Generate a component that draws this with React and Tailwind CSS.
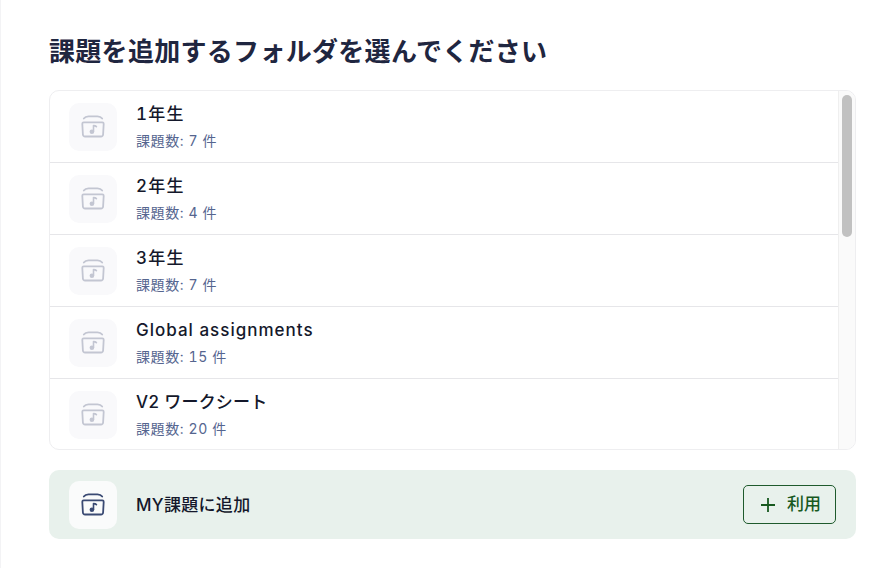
function FolderIcon({ color }) {
  return (
    <svg width="24" height="24" viewBox="0 0 24 24" fill="none" stroke={color} strokeWidth="1.8" strokeLinecap="round" strokeLinejoin="round">
      <path d="M2.8 3.6C4 1.8 5.5 1.3 7.5 1.3h9c2 0 3.5.5 4.7 2.3" />
      <path d="M2.6 7.4h18.8c.8 0 1.3.6 1.3 1.3l-.6 10.8c-.1 1.2-1 2-2.2 2H4.1c-1.2 0-2.1-.8-2.2-2L1.3 8.7c0-.7.5-1.3 1.3-1.3Z" />
      <circle cx="10.9" cy="16.8" r="2.3" fill={color} stroke="none" />
      <path d="M12.5 16.4V10.6c1 0 2.2.2 2.9 1" strokeWidth="1.6" />
    </svg>
  );
}

const rows = [
  { name: "1年生", count: "課題数: 7 件", cls: "tracking-[1.2px]" },
  { name: "2年生", count: "課題数: 4 件", cls: "tracking-[1.2px]" },
  { name: "3年生", count: "課題数: 7 件", cls: "tracking-[1.2px]" },
  { name: "Global assignments", count: "課題数: 15 件", cls: "tracking-[1px]" },
  { name: "V2 ワークシート", count: "課題数: 20 件", cls: "tracking-[0.2px]" },
];

export default function App() {
  return (
    <div className="h-[568px] w-[886px] overflow-hidden border-l border-[#f3f3f5] bg-white pl-[48px] pr-[30px] pt-[37px] font-['Inter','Noto_Sans_CJK_JP',sans-serif]">
      <h1 className="h-[30px] text-[26px] font-semibold leading-[30px] tracking-[0.3px] text-[#1f2640]">
        課題を追加するフォルダを選んでください
      </h1>
      <div className="mt-[23px] flex h-[360px] overflow-hidden rounded-[10px] border border-[#eeeef0] bg-white">
        <div className="flex-1 overflow-hidden">
          {rows.map(({ name, count, cls }) => (
            <div key={name} className="flex h-[72px] shrink-0 items-center gap-[19px] border-b border-[#e6e6e9] pl-[19px]">
              <div className="flex h-[48px] w-[48px] items-center justify-center rounded-[10px] bg-[#f9f9fb]">
                <FolderIcon color="#c3c6d2" />
              </div>
              <div className="pb-[1px] tabular-nums">
                <div className={"text-[17px] font-medium leading-[24px] text-[#14182b] " + cls}>{name}</div>
                <div className="mt-[5px] text-[14px] leading-[20px] tracking-[0.6px] text-[#55658f]">{count}</div>
              </div>
            </div>
          ))}
        </div>
        <div className="w-[17px] border-l border-[#efefef] bg-[#fafafa] pl-[3px] pt-[4px]">
          <div className="h-[142px] w-[10px] rounded-full bg-[#c1c1c1]" />
        </div>
      </div>
      <div className="mt-[20px] flex h-[69px] items-center justify-between rounded-[10px] bg-[#e8f1ec] pl-[20px] pr-[20px]">
        <div className="flex items-center gap-[19px]">
          <div className="flex h-[48px] w-[48px] items-center justify-center rounded-[10px] bg-[#fafbfb]">
            <FolderIcon color="#3a4a73" />
          </div>
          <span className="text-[17px] font-medium leading-[24px] tracking-[0.3px] text-[#14182b]">MY課題に追加</span>
        </div>
        <button className="flex h-[39px] w-[93px] items-center justify-center gap-[12px] rounded-[5px] border border-[#1e5a2c] pl-[3px] text-[17px] font-medium text-[#17591f]">
          <svg width="14" height="14" viewBox="0 0 14 14" fill="none" stroke="#17591f" strokeWidth="1.8">
            <path d="M7 0v14M0 7h14" />
          </svg>
          利用
        </button>
      </div>
    </div>
  );
}
